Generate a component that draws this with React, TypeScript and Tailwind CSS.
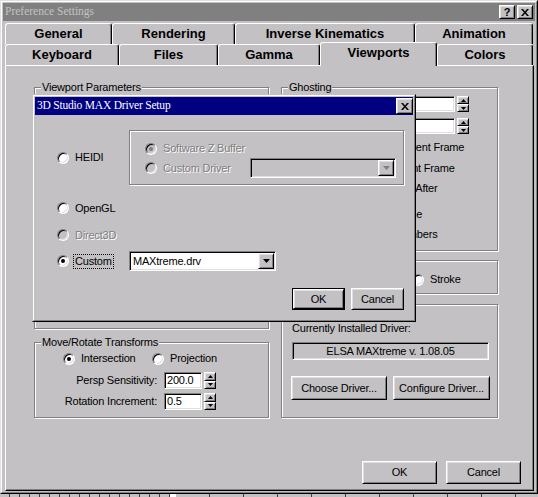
import React from "react";

// classic 3D edges
const raised =
  "border border-t-white border-l-white border-r-black border-b-black shadow-[inset_1px_1px_0_#dfdfdf,inset_-1px_-1px_0_#808080]";
const sunken =
  "border border-t-[#808080] border-l-[#808080] border-r-white border-b-white shadow-[inset_1px_1px_0_#000,inset_-1px_-1px_0_#dfdfdf]";
const etched = "border border-[#808080] shadow-[inset_1px_1px_0_#fff,1px_1px_0_#fff]";
const dim = "text-[#808080] [text-shadow:1px_1px_0_#fff]";

const backTabs = [
  { label: "General", w: "w-[107px]" },
  { label: "Rendering", w: "w-[123px]" },
  { label: "Inverse Kinematics", w: "w-[180px]" },
  { label: "Animation", w: "w-[118px]" },
];

const frontTabs = [
  { label: "Keyboard", w: "w-[114px]" },
  { label: "Files", w: "w-[99px]" },
  { label: "Gamma", w: "w-[102px]" },
  { label: "Viewports", w: "w-[117px]", active: true },
  { label: "Colors", w: "w-[96px]" },
];

function Tab({ label, w, active }: { label: string; w: string; active?: boolean }) {
  return (
    <div
      className={`${w} flex shrink-0 items-center justify-center rounded-t-[3px] border-t border-l border-r border-t-white border-l-white border-r-black shadow-[inset_-1px_0_0_#808080] text-[13px] font-bold ${
        active ? "relative z-10 -mt-[2px] h-[24px] bg-[#c3c1c3] pb-[3px]" : "h-[21px]"
      }`}
    >
      {label}
    </div>
  );
}

function Group({
  label,
  className,
  children,
}: {
  label?: string;
  className?: string;
  children?: React.ReactNode;
}) {
  return (
    <div className={`relative ${etched} ${className ?? ""}`}>
      {label && (
        <span className="absolute -top-[7px] left-[6px] bg-[#c3c1c3] px-[1px] leading-[13px]">{label}</span>
      )}
      {children}
    </div>
  );
}

function Radio({ checked, disabled }: { checked?: boolean; disabled?: boolean }) {
  return (
    <span
      className={`flex h-[12px] w-[12px] shrink-0 items-center justify-center rounded-full border border-t-[#808080] border-l-[#808080] border-r-white border-b-white shadow-[inset_1px_1px_0_#000,inset_-1px_-1px_0_#dfdfdf] ${
        disabled ? "bg-[#c3c1c3]" : "bg-white"
      }`}
    >
      {checked && <span className={`h-[4px] w-[4px] rounded-full ${disabled ? "bg-[#808080]" : "bg-black"}`} />}
    </span>
  );
}

function Check() {
  return <span className={`h-[13px] w-[13px] shrink-0 bg-white ${sunken}`} />;
}

function Option({
  label,
  checked,
  disabled,
  focus,
  className,
  box,
}: {
  label: string;
  checked?: boolean;
  disabled?: boolean;
  focus?: boolean;
  className?: string;
  box?: boolean;
}) {
  return (
    <div className={`flex items-center gap-[4px] ${className ?? ""}`}>
      {box ? <Check /> : <Radio checked={checked} disabled={disabled} />}
      <span
        className={`whitespace-nowrap border px-[1px] leading-[13px] ${
          focus ? "border-dotted border-black" : "border-transparent"
        } ${disabled ? dim : ""}`}
      >
        {label}
      </span>
    </div>
  );
}

function Arrow({ up, color = "#000" }: { up?: boolean; color?: string }) {
  return (
    <svg width="5" height="3" viewBox="0 0 5 3">
      <path d={up ? "M0 3H5L2.5 0Z" : "M0 0H5L2.5 3Z"} fill={color} />
    </svg>
  );
}

function Spinner() {
  return (
    <span className="ml-[2px] flex h-full w-[12px] shrink-0 flex-col">
      <span className={`flex flex-1 items-center justify-center ${raised}`}>
        <Arrow up />
      </span>
      <span className={`flex flex-1 items-center justify-center ${raised}`}>
        <Arrow />
      </span>
    </span>
  );
}

function SpinField({ value, w }: { value?: string; w: string }) {
  return (
    <div className="flex h-full items-stretch">
      <span className={`${w} flex items-center bg-white pl-[2px] leading-none ${sunken}`}>{value}</span>
      <Spinner />
    </div>
  );
}

function Combo({ value, disabled, w }: { value?: string; disabled?: boolean; w: string }) {
  return (
    <div className={`${w} flex h-[20px] items-stretch p-[1px] ${sunken} ${disabled ? "bg-[#c3c1c3]" : "bg-white"}`}>
      <span className="flex flex-1 items-center pl-[2px]">{value}</span>
      <span className={`flex w-[16px] items-center justify-center ${raised} bg-[#c3c1c3]`}>
        <svg width="7" height="4" viewBox="0 0 7 4">
          <path d="M0 0H7L3.5 4Z" fill={disabled ? "#808080" : "#000"} />
        </svg>
      </span>
    </div>
  );
}

function Button({ label, className }: { label: string; className?: string }) {
  return (
    <div className={`flex items-center justify-center bg-[#c3c1c3] ${raised} ${className ?? ""}`}>{label}</div>
  );
}

function CloseGlyph() {
  return (
    <svg width="8" height="7" viewBox="0 0 8 7">
      <path d="M0 0h2l2 2.5L6 0h2L5 3.5 8 7H6L4 4.5 2 7H0l3-3.5z" fill="#000" />
    </svg>
  );
}

function DriverSetup() {
  return (
    <div className="absolute left-[32px] top-[94px] h-[228px] w-[384px] border border-t-[#c3c1c3] border-l-[#c3c1c3] border-r-black border-b-black bg-[#c3c1c3]">
      <div className="flex h-full flex-col border border-t-white border-l-white border-r-[#808080] border-b-[#808080] p-[1px]">
        <div className="flex h-[18px] shrink-0 items-center justify-between bg-[#000080] pl-[2px] font-['Liberation_Serif','Times_New_Roman',serif] text-[11.5px] text-white">
          <span>3D Studio MAX Driver Setup</span>
          <span className={`flex h-[16px] w-[17px] items-center justify-center bg-[#c3c1c3] ${raised}`}>
            <CloseGlyph />
          </span>
        </div>

        <div className="mt-[15px] flex items-center pl-[22px]">
          <Option label="HEIDI" className="w-[72px]" />
          <Group className="h-[55px] w-[275px] pl-[15px] pt-[11px]">
            <Option label="Software Z Buffer" checked disabled className="h-[13px]" />
            <div className="mt-[3px] flex h-[20px] items-center">
              <Option label="Custom Driver" disabled className="w-[105px]" />
              <Combo disabled w="w-[146px]" />
            </div>
          </Group>
        </div>

        <Option label="OpenGL" className="mt-[16px] h-[14px] pl-[22px]" />
        <Option label="Direct3D" disabled className="mt-[13px] h-[14px] pl-[22px]" />

        <div className="mt-[9px] flex h-[20px] items-center pl-[22px]">
          <Option label="Custom" checked focus className="w-[72px]" />
          <Combo value="MAXtreme.drv" w="w-[147px]" />
        </div>

        <div className="mt-[17px] flex justify-end gap-[6px] pr-[9px]">
          <div className="h-[22px] w-[53px] border border-black">
            <Button label="OK" className="h-full w-full" />
          </div>
          <Button label="Cancel" className="h-[22px] w-[53px]" />
        </div>
      </div>
    </div>
  );
}

export default function App() {
  return (
    <div className="relative h-[497px] w-[538px] overflow-hidden bg-[#c3c1c3] font-['Liberation_Sans',Arial,sans-serif] text-[11px] tracking-[-0.2px] text-black">
      <div className="h-[494px] border border-t-[#dfdfdf] border-l-[#dfdfdf] border-r-black border-b-black">
        <div className="flex h-full flex-col border border-t-white border-l-white border-r-[#808080] border-b-[#808080] p-[1px]">
          {/* caption */}
          <div className="flex h-[18px] shrink-0 items-center justify-between bg-[#808080] pl-[2px] pr-[2px]">
            <span className="font-['Liberation_Serif','Times_New_Roman',serif] text-[11.5px] tracking-normal text-[#c3c1c3]">
              Preference Settings
            </span>
            <div className="flex gap-[2px]">
              <span className={`flex h-[14px] w-[16px] items-center justify-center bg-[#c3c1c3] text-[11px] font-bold ${raised}`}>
                ?
              </span>
              <span className={`flex h-[14px] w-[16px] items-center justify-center bg-[#c3c1c3] ${raised}`}>
                <CloseGlyph />
              </span>
            </div>
          </div>

          {/* tabs */}
          <div className="mt-[2px] flex h-[21px] shrink-0 pl-[2px] tracking-normal">
            {backTabs.map((t) => (
              <Tab key={t.label} {...t} />
            ))}
          </div>
          <div className="flex h-[21px] shrink-0 pl-[2px] tracking-normal">
            {frontTabs.map((t) => (
              <Tab key={t.label} {...t} />
            ))}
          </div>

          {/* Viewports page */}
          <div className="ml-[2px] mr-[1px] flex flex-1 flex-col border border-t-white border-l-white border-r-black border-b-black pl-[28px] pr-[12px] pt-[21px] shadow-[inset_-1px_-1px_0_#808080]">
            <div className="flex items-start gap-[12px]">
              <div className="flex w-[235px] flex-col">
                <Group label="Viewport Parameters" className="h-[242px]" />
                <Group label="Move/Rotate Transforms" className="mt-[13px] h-[76px] pl-[28px] pt-[9px]">
                  <div className="flex h-[13px] items-center">
                    <Option label="Intersection" checked className="w-[89px]" />
                    <Option label="Projection" />
                  </div>
                  <div className="-ml-[28px] mt-[7px] flex h-[17px] items-center">
                    <span className="w-[123px] pr-[1px] text-right">Persp Sensitivity:</span>
                    <span className="ml-[6px] h-full">
                      <SpinField value="200.0" w="w-[38px]" />
                    </span>
                  </div>
                  <div className="-ml-[28px] mt-[4px] flex h-[17px] items-center">
                    <span className="w-[123px] pr-[1px] text-right">Rotation Increment:</span>
                    <span className="ml-[6px] h-full">
                      <SpinField value="0.5" w="w-[38px]" />
                    </span>
                  </div>
                </Group>
              </div>

              <div className="flex w-[217px] flex-col">
                <Group label="Ghosting" className="h-[164px] pt-[8px]">
                  <div className="flex h-[16px] items-center justify-between pl-[8px] pr-[28px]">
                    <span>Ghosting Frames:</span>
                    <SpinField w="w-[41px]" />
                  </div>
                  <div className="mt-[6px] flex h-[16px] items-center justify-between pl-[8px] pr-[28px]">
                    <span>Display Nth Frame:</span>
                    <SpinField w="w-[41px]" />
                  </div>
                  <Option label="Ghost Before Current Frame" checked className="mt-[6px] h-[14px] pl-[30px]" />
                  <Option label="Ghost After Current Frame" className="mt-[7px] h-[14px] pl-[30px]" />
                  <Option label="Ghost Before and After" className="mt-[6px] h-[14px] pl-[30px]" />
                  <Option label="Ghost in Wireframe" box className="mt-[12px] h-[14px] pl-[30px]" />
                  <Option label="Show Frame Numbers" box className="mt-[6px] h-[14px] pl-[30px]" />
                </Group>

                <Group className="mt-[9px] h-[34px] pt-[12px]">
                  <div className="flex h-[13px] items-center pl-[30px]">
                    <Option label="Pan/Zoom" checked className="w-[100px]" />
                    <Option label="Stroke" />
                  </div>
                </Group>

                <Group className="mt-[10px] h-[114px] pl-[10px] pt-[16px]">
                  <div className="leading-[14px]">Currently Installed Driver:</div>
                  <div className={`mt-[7px] flex h-[18px] w-[197px] items-center justify-center ${sunken}`}>
                    ELSA MAXtreme v. 1.08.05
                  </div>
                  <div className="-ml-[1px] mt-[16px] flex gap-[6px]">
                    <Button label="Choose Driver..." className="h-[24px] w-[96px]" />
                    <Button label="Configure Driver..." className="h-[24px] w-[97px]" />
                  </div>
                </Group>
              </div>
            </div>

            <div className="mt-[43px] flex justify-end gap-[9px]">
              <Button label="OK" className="h-[23px] w-[75px]" />
              <Button label="Cancel" className="h-[23px] w-[75px]" />
            </div>
          </div>
        </div>
      </div>

      {/* track bar peeking out below the window */}
      <div className="flex h-[3px]">
        {Array.from({ length: 17 }).map((_, i) => (
          <span key={`a${i}`} className="w-[10px] shrink-0 border-r border-[#404040]" />
        ))}
        <span className="w-[6px] shrink-0 bg-white" />
        {Array.from({ length: 11 }).map((_, i) => (
          <span key={`b${i}`} className="w-[34px] shrink-0 border-r border-[#404040]" />
        ))}
      </div>

      <DriverSetup />
    </div>
  );
}
